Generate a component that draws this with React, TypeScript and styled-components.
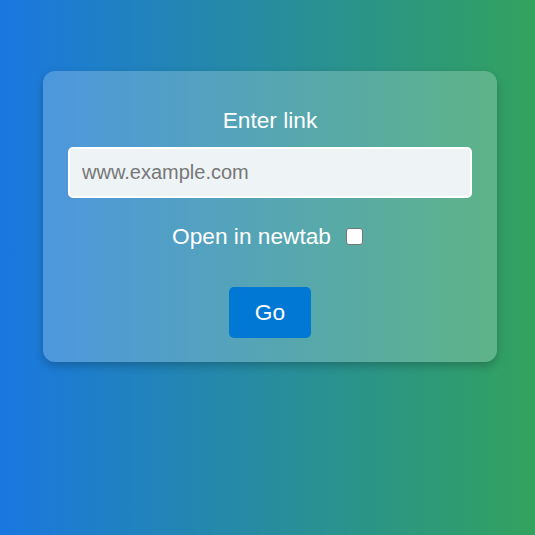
import React, { useState } from 'react'
import styled, { createGlobalStyle } from 'styled-components'

const GlobalStyle = createGlobalStyle`
  html, body {
    margin: 0;
    padding: 0;
    height: 100%;
  }
  body {
    font-family: "Liberation Sans", Arial, sans-serif;
    background: linear-gradient(to right, #1a77e0, #33a25e);
    min-height: 535px;
  }
`

const Page = styled.div`
  width: 535px;
  height: 535px;
  padding-top: 71px;
  box-sizing: border-box;
`

const Card = styled.div`
  width: 454px;
  margin-left: 43px;
  box-sizing: border-box;
  padding: 36px 25px 24px;
  background: rgba(255, 255, 255, 0.22);
  border-radius: 12px;
  box-shadow: 0 4px 10px rgba(0, 0, 0, 0.22);
  display: flex;
  flex-direction: column;
  align-items: center;
`

const Title = styled.div`
  color: #fff;
  font-size: 22.7px;
  line-height: 26px;
  margin-bottom: 14px;
`

const LinkInput = styled.input`
  width: 100%;
  height: 51px;
  box-sizing: border-box;
  padding: 0 12px;
  border: 2px solid #fff;
  border-radius: 5px;
  background: #eef4f6;
  font-family: "Liberation Sans", Arial, sans-serif;
  font-size: 20px;
  color: #333;
  outline: none;

  &::placeholder {
    color: #777;
  }
`

const CheckRow = styled.label`
  margin-top: 25px;
  display: flex;
  align-items: center;
  gap: 15px;
  color: #fff;
  font-size: 22.7px;
  line-height: 26px;
  cursor: pointer;
`

const Check = styled.input`
  width: 17px;
  height: 17px;
  margin: 0 5px 0 0;
  appearance: none;
  background: #fff;
  border: 1px solid #767676;
  border-radius: 3px;
  box-sizing: border-box;
  cursor: pointer;

  &:checked {
    background: #0075ff;
    border-color: #0075ff;
  }
`

const GoButton = styled.button`
  margin-top: 38px;
  width: 82px;
  height: 51px;
  border: none;
  border-radius: 5px;
  background: #0078d4;
  color: #fff;
  font-family: "Liberation Sans", Arial, sans-serif;
  font-size: 22.7px;
  cursor: pointer;
`

const App = () => {
  const [link, setLink] = useState<string>('')
  const [newTab, setNewTab] = useState<boolean>(false)

  const handleGo = () => {
    if (!link) return
    const url = link.startsWith('http') ? link : `https://${link}`
    if (newTab) window.open(url, '_blank')
    else window.location.href = url
  }

  return (
    <Page>
      <GlobalStyle />
      <Card>
        <Title>Enter link</Title>
        <LinkInput
          placeholder="www.example.com"
          value={link}
          onChange={(e) => setLink(e.target.value)}
        />
        <CheckRow>
          Open in newtab
          <Check type="checkbox" checked={newTab} onChange={() => setNewTab(!newTab)} />
        </CheckRow>
        <GoButton onClick={handleGo}>Go</GoButton>
      </Card>
    </Page>
  )
}

export default App
